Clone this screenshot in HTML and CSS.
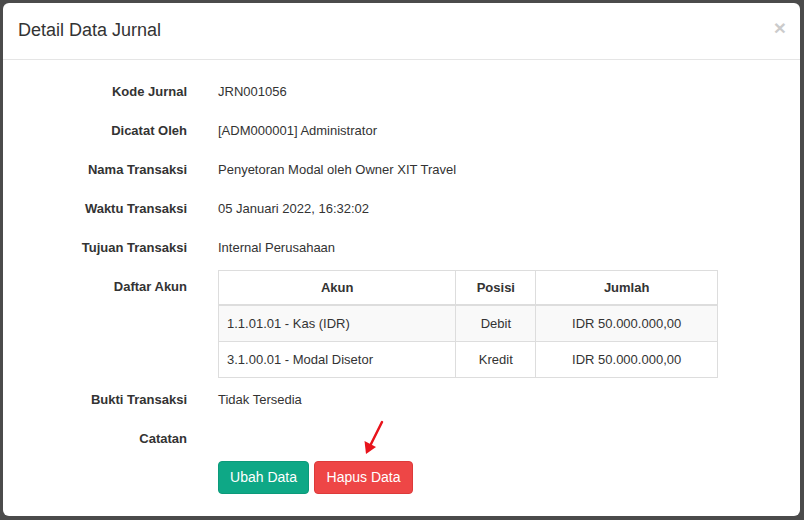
FILE: index.html
```html
<!DOCTYPE html>
<html lang="id">
<head>
<meta charset="utf-8">
<title>Detail Data Jurnal</title>
<link rel="stylesheet" href="styles.css">
</head>
<body>
<div class="modal">
  <div class="modal-header">
    <h4 class="modal-title">Detail Data Jurnal</h4>
    <button class="close" type="button">&times;</button>
  </div>
  <div class="modal-body">
    <div class="row"><div class="label">Kode Jurnal</div><div class="value">JRN001056</div></div>
    <div class="row"><div class="label">Dicatat Oleh</div><div class="value">[ADM000001] Administrator</div></div>
    <div class="row"><div class="label">Nama Transaksi</div><div class="value">Penyetoran Modal oleh Owner XIT Travel</div></div>
    <div class="row"><div class="label">Waktu Transaksi</div><div class="value">05 Januari 2022, 16:32:02</div></div>
    <div class="row"><div class="label">Tujuan Transaksi</div><div class="value">Internal Perusahaan</div></div>
    <div class="row row-table">
      <div class="label">Daftar Akun</div>
      <div class="value">
        <table class="tbl">
          <thead>
            <tr><th class="c-akun">Akun</th><th class="c-pos">Posisi</th><th class="c-jml">Jumlah</th></tr>
          </thead>
          <tbody>
            <tr class="striped"><td>1.1.01.01 - Kas (IDR)</td><td class="center">Debit</td><td class="center">IDR 50.000.000,00</td></tr>
            <tr><td>3.1.00.01 - Modal Disetor</td><td class="center">Kredit</td><td class="center">IDR 50.000.000,00</td></tr>
          </tbody>
        </table>
      </div>
    </div>
    <div class="row"><div class="label">Bukti Transaksi</div><div class="value">Tidak Tersedia</div></div>
    <div class="row"><div class="label">Catatan</div><div class="value"></div></div>
    <div class="row row-actions">
      <div class="label"></div>
      <div class="value actions">
        <button class="btn btn-green" type="button">Ubah Data</button>
        <button class="btn btn-red" type="button">Hapus Data</button>
      </div>
    </div>
  </div>
</div>
<svg class="arrow" width="35" height="45" viewBox="0 0 35 45">
  <line x1="27" y1="7" x2="16" y2="29" stroke="#e8141c" stroke-width="2.5" stroke-linecap="round"/>
  <polygon points="11,39 9.5,26 21,32" fill="#e8141c"/>
</svg>
</body>
</html>
```
FILE: styles.css
```css
html, body {
  margin: 0;
  padding: 0;
}
body {
  background: #4b4b4b;
  font-family: "Liberation Sans", Arial, sans-serif;
  font-size: 13px;
  color: #333;
  width: 804px;
  height: 520px;
  overflow: hidden;
  position: relative;
}
.modal {
  margin: 3px 0 0 3px;
  width: 797px;
  height: 513px;
  background: #fff;
  border-radius: 6px;
  box-sizing: border-box;
  overflow: hidden;
}
.modal-header {
  height: 57px;
  box-sizing: border-box;
  border-bottom: 1px solid #e5e5e5;
  display: flex;
  align-items: center;
  justify-content: space-between;
  padding: 0 14px 2px 15px;
}
.modal-title {
  margin: 0;
  font-size: 18px;
  font-weight: normal;
  color: #333;
  line-height: 20px;
}
.close {
  border: 0;
  background: transparent;
  padding: 0;
  font-family: "Liberation Sans", Arial, sans-serif;
  font-size: 21px;
  font-weight: bold;
  line-height: 1;
  color: #000;
  opacity: 0.2;
  margin-top: -5px;
}
.modal-body {
  padding-top: 12px;
}
.row {
  display: grid;
  grid-template-columns: 184px 500px;
  column-gap: 31px;
  align-items: center;
  height: 39px;
  line-height: 19px;
}
.label {
  text-align: right;
  font-weight: bold;
}
.row-table {
  height: auto;
  align-items: start;
  margin-top: 3px;
  margin-bottom: 2px;
}
.row-table .label {
  padding-top: 7px;
}
.tbl {
  border-collapse: collapse;
  width: 500px;
  font-size: 13px;
  line-height: 19px;
}
.tbl th, .tbl td {
  border: 1px solid #ddd;
}
.tbl th {
  padding: 7px 8px;
  font-weight: bold;
  text-align: center;
  border-bottom: 2px solid #ddd;
}
.tbl td {
  padding: 8px 8px;
}
.tbl .center {
  text-align: center;
}
.tbl .striped td {
  background: #f9f9f9;
}
.c-akun { width: 221px; }
.c-pos { width: 63px; }
.c-jml { width: 165px; }
.row-actions {
  height: auto;
  margin-top: 3px;
}
.actions {
  display: flex;
  gap: 5px;
}
.btn {
  font-family: "Liberation Sans", Arial, sans-serif;
  font-size: 14px;
  line-height: 19px;
  padding: 6px 12px;
  border-radius: 4px;
  color: #fff;
  border: 1px solid transparent;
  cursor: pointer;
}
.btn-green {
  width: 91px;
  padding: 6px 0;
  background: #0ea886;
  border-color: #0c9a7a;
}
.btn-red {
  width: 99px;
  padding: 6px 0;
  background: #ee4646;
  border-color: #dd3a3a;
}
.arrow {
  position: absolute;
  left: 355px;
  top: 415px;
}
```
